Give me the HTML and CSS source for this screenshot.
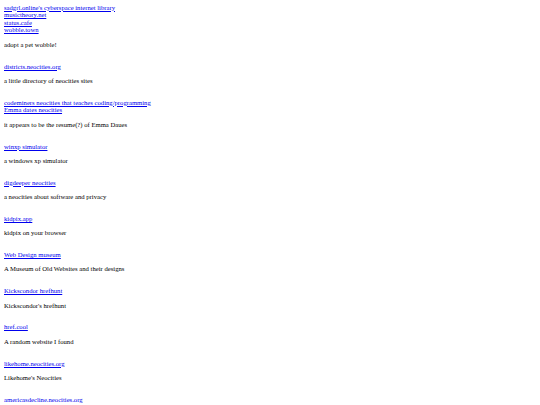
FILE: index.html
```html
<!DOCTYPE html>
<html>
<head>
<meta charset="utf-8">
<link rel="stylesheet" href="styles.css">
</head>
<body>
<a href="#">sadgrl.online's cyberspace internet library</a><br>
<a href="#">musictheory.net</a><br>
<a href="#">status.cafe</a><br>
<a href="#">wobble.town</a>
<p>adopt a pet wobble!</p>
<br>
<a href="#">districts.neocities.org</a>
<p>a little directory of neocities sites</p>
<br>
<a href="#">codeminers neocities that teaches coding/programming</a><br>
<a href="#">Emma dates neocities</a>
<p>it appears to be the resume(?) of Emma Daues</p>
<br>
<a href="#">winxp simulator</a>
<p>a windows xp simulator</p>
<br>
<a href="#">digdeeper neocities</a>
<p>a neocities about software and privacy</p>
<br>
<a href="#">kidpix.app</a>
<p>kidpix on your browser</p>
<br>
<a href="#">Web Design museum</a>
<p>A Museum of Old Websites and their designs</p>
<br>
<a href="#">Kickscondor hrefhunt</a>
<p>Kickscondor's hrefhunt</p>
<br>
<a href="#">href.cool</a>
<p>A random website I found</p>
<br>
<a href="#">likehome.neocities.org</a>
<p>Likehome's Neocities</p>
<br>
<a href="#">americasdecline.neocities.org</a>
</body>
</html>
```
FILE: styles.css
```css
html {
  background: #ffffff;
}
body {
  margin: 3.5px 4px 4px;
  font-family: "Liberation Serif", "Times New Roman", serif;
  font-size: 6.667px;
  line-height: 7.64px;
  color: #000000;
}
a {
  color: #0000ee;
}
p {
  margin: 6.64px 0;
}
```
